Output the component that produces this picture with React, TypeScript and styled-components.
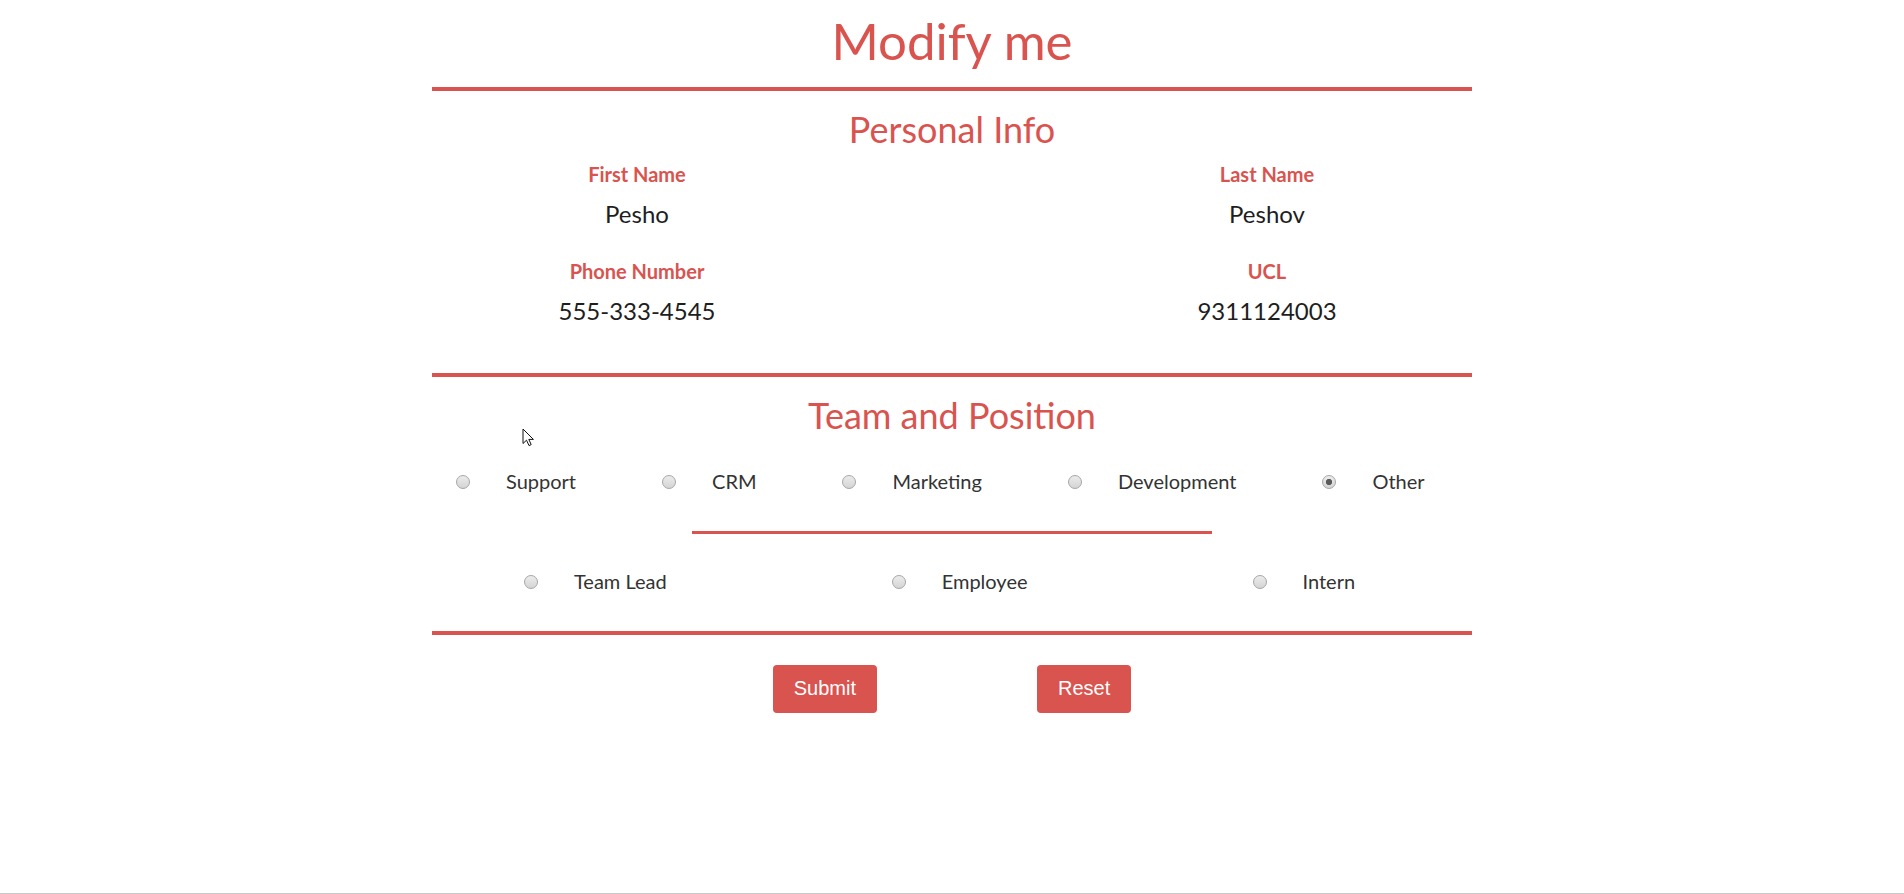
import styled, { createGlobalStyle } from 'styled-components';

const RED = '#d9534f';

const GlobalStyle = createGlobalStyle`
  html, body {
    margin: 0;
    padding: 0;
    background: #fff;
  }
  body {
    font-family: Lato, "Segoe UI", "Open Sans", sans-serif;
    color: #222;
  }
`;

const teams = ['Support', 'CRM', 'Marketing', 'Development', 'Other'];
const positions = ['Team Lead', 'Employee', 'Intern'];

const personal = [
  { label: 'First Name', value: 'Pesho' },
  { label: 'Last Name', value: 'Peshov' },
  { label: 'Phone Number', value: '555-333-4545' },
  { label: 'UCL', value: '9311124003' },
];

export default function App() {
  return (
    <Page>
      <GlobalStyle />
      <Form onSubmit={(e) => e.preventDefault()}>
        <Title>Modify me</Title>
        <Rule />
        <SectionTitle>Personal Info</SectionTitle>
        <InfoGrid>
          {personal.map((field) => (
            <Field key={field.label}>
              <FieldLabel>{field.label}</FieldLabel>
              <FieldValue>{field.value}</FieldValue>
            </Field>
          ))}
        </InfoGrid>
        <Rule />
        <SectionTitle>Team and Position</SectionTitle>
        <RadioRow $top={31} $pad={24} $gap={86}>
          {teams.map((team) => (
            <RadioOption key={team}>
              <Radio type="radio" name="team" defaultChecked={team === 'Other'} />
              <span>{team}</span>
            </RadioOption>
          ))}
        </RadioRow>
        <ShortRule />
        <RadioRow $top={0} $pad={92} $gap={225}>
          {positions.map((pos) => (
            <RadioOption key={pos}>
              <Radio type="radio" name="position" />
              <span>{pos}</span>
            </RadioOption>
          ))}
        </RadioRow>
        <Rule $top={38} />
        <Buttons>
          <Button type="submit">Submit</Button>
          <Button type="reset">Reset</Button>
        </Buttons>
      </Form>
      <Cursor width="13" height="19" viewBox="0 0 13 19">
        <path
          d="M1 1 L1 15.5 L4.5 12.2 L7 17.6 L9.2 16.6 L6.8 11.4 L11.4 11.4 Z"
          fill="#fff"
          stroke="#111"
          strokeWidth="1"
          strokeLinejoin="round"
        />
      </Cursor>
    </Page>
  );
}

const Page = styled.div`
  position: relative;
  min-height: 100vh;
  box-sizing: border-box;
  border-bottom: 1px solid #c9c9c9;
`;

const Form = styled.form`
  width: 1040px;
  margin: 0 auto;
  display: flex;
  flex-direction: column;
`;

const Title = styled.h1`
  margin: 10px 0 16px;
  font-size: 51px;
  line-height: 1.2;
  font-weight: 400;
  color: ${RED};
  text-align: center;
`;

const Rule = styled.hr<{ $top?: number }>`
  margin: ${(p) => p.$top ?? 0}px 0 0;
  border: none;
  height: 4px;
  background: ${RED};
`;

const ShortRule = styled.hr`
  width: 520px;
  margin: 38px auto 35px;
  border: none;
  height: 3px;
  background: ${RED};
`;

const SectionTitle = styled.h2`
  margin: 17px 0 0;
  font-size: 36px;
  line-height: 1.2;
  font-weight: 400;
  color: ${RED};
  text-align: center;
`;

const InfoGrid = styled.div`
  display: grid;
  grid-template-columns: 410px 410px;
  justify-content: space-between;
  row-gap: 31px;
  margin: 11px 0 48px;
`;

const Field = styled.div`
  display: flex;
  flex-direction: column;
  align-items: center;
  gap: 13px;
`;

const FieldLabel = styled.label`
  font-size: 20px;
  line-height: 24px;
  font-weight: 700;
  color: ${RED};
`;

const FieldValue = styled.div`
  font-size: 24px;
  line-height: 29px;
  color: #1e1e1e;
`;

const RadioRow = styled.div<{ $top: number; $pad: number; $gap: number }>`
  display: flex;
  align-items: center;
  gap: ${(p) => p.$gap}px;
  padding-left: ${(p) => p.$pad}px;
  margin-top: ${(p) => p.$top}px;
`;

const RadioOption = styled.label`
  display: flex;
  align-items: center;
  gap: 36px;
  font-size: 20px;
  line-height: 24px;
  color: #333;
`;

const Radio = styled.input`
  appearance: none;
  margin: 2px 0 0;
  width: 14px;
  height: 14px;
  border-radius: 50%;
  border: 1px solid #a6a6a6;
  box-sizing: border-box;
  background: linear-gradient(#ececec, #d4d4d4);
  &:checked {
    background: radial-gradient(circle, #5a5a5a 0 2.8px, transparent 3.4px),
      linear-gradient(#ececec, #d4d4d4);
  }
`;

const Buttons = styled.div`
  display: flex;
  justify-content: center;
  gap: 160px;
  margin-top: 30px;
`;

const Button = styled.button`
  height: 48px;
  padding: 0 21px;
  border: none;
  border-radius: 4px;
  background: ${RED};
  color: #fff;
  font-family: "Liberation Sans", Arial, sans-serif;
  font-size: 20px;
  cursor: pointer;
`;

const Cursor = styled.svg`
  position: absolute;
  left: 522px;
  top: 428px;
  pointer-events: none;
`;
